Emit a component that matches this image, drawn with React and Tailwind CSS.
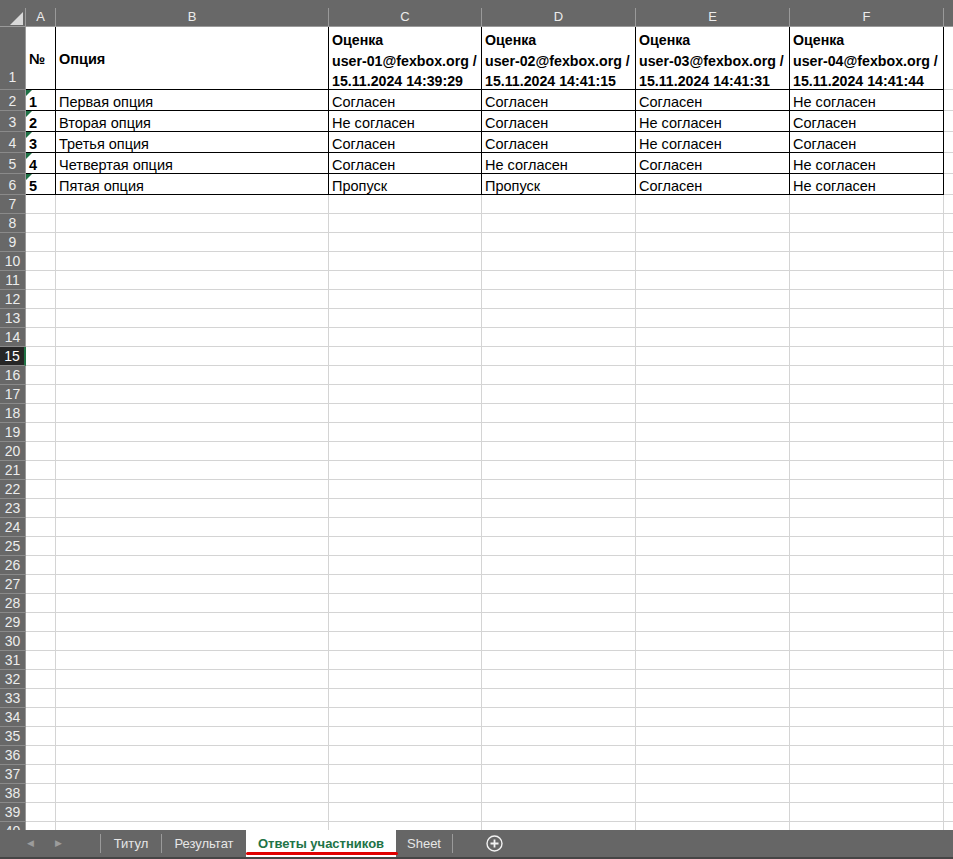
import React from 'react';

const cols = [
  { key: 'A', w: 'w-[30px]' },
  { key: 'B', w: 'w-[273px]' },
  { key: 'C', w: 'w-[153px]' },
  { key: 'D', w: 'w-[154px]' },
  { key: 'E', w: 'w-[154px]' },
  { key: 'F', w: 'w-[154px]' },
];

const heads = [
  ['user-01@fexbox.org /', '15.11.2024 14:39:29'],
  ['user-02@fexbox.org /', '15.11.2024 14:41:15'],
  ['user-03@fexbox.org /', '15.11.2024 14:41:31'],
  ['user-04@fexbox.org /', '15.11.2024 14:41:44'],
];

const data = [
  ['1', 'Первая опция', 'Согласен', 'Согласен', 'Согласен', 'Не согласен'],
  ['2', 'Вторая опция', 'Не согласен', 'Согласен', 'Не согласен', 'Согласен'],
  ['3', 'Третья опция', 'Согласен', 'Согласен', 'Не согласен', 'Согласен'],
  ['4', 'Четвертая опция', 'Согласен', 'Не согласен', 'Согласен', 'Не согласен'],
  ['5', 'Пятая опция', 'Пропуск', 'Пропуск', 'Согласен', 'Не согласен'],
];

function RowHead({ n, h, bottom, pad = '' }) {
  const sel = n === 15;
  return (
    <div
      className={`w-[26px] shrink-0 ${h} ${pad} flex justify-center ${bottom ? 'items-end pb-[1px]' : 'items-center'} text-[14px] border-b border-[#8a8a8a] ${
        sel ? 'bg-[#262626] text-white border-r-2 border-r-[#217346]' : 'bg-[#686868] text-[#ececec] border-r border-r-[#9a9a9a]'
      }`}
    >
      {n}
    </div>
  );
}

function Cell({ w, h, black, children, className = '' }) {
  return (
    <div
      className={`${w} ${h} shrink-0 border-r border-b px-[3px] overflow-hidden whitespace-nowrap ${
        black ? 'border-black' : 'border-[#d4d4d4]'
      } ${className}`}
    >
      {children}
    </div>
  );
}

function Sep() {
  return <div className="w-px shrink-0 bg-[#9a9a9a] my-[4px]" />;
}

export default function App() {
  const empty = [];
  for (let i = 7; i <= 40; i++) empty.push(i);

  return (
    <div
      className="w-[953px] h-[859px] flex flex-col bg-white overflow-hidden select-none"
      style={{ fontFamily: '"Liberation Sans", Arial, sans-serif' }}
    >
      <div className="flex-1 overflow-hidden">
        {/* top band + column headers */}
        <div className="h-[8px] bg-[#686868]" />
        <div className="flex h-[19px] bg-[#686868] text-[#ececec] text-[13px] border-b border-[#9a9a9a]">
          <div className="w-[26px] shrink-0 relative border-r border-[#9a9a9a]">
            <svg className="absolute left-[10px] top-[4px]" width="13" height="13" viewBox="0 0 13 13">
              <polygon points="13,0 13,13 0,13" fill="#d9d9d9" />
            </svg>
          </div>
          {cols.map((c) => (
            <div key={c.key} className={`${c.w} shrink-0 border-r border-[#9a9a9a] flex items-center justify-center`}>
              {c.key}
            </div>
          ))}
          <div className="flex-1" />
        </div>

        {/* row 1 */}
        <div className="flex text-[14.5px] text-black">
          <RowHead n={1} h="h-[63px]" bottom />
          <Cell w={cols[0].w} h="h-[63px]" black className="flex items-center pt-[4px] font-bold">№</Cell>
          <Cell w={cols[1].w} h="h-[63px]" black className="flex items-center pt-[4px] font-bold">Опция</Cell>
          {heads.map((hd, i) => (
            <Cell key={i} w={cols[i + 2].w} h="h-[63px]" black className="font-bold text-[14.2px] leading-[20.5px] pt-[3px]">
              <div>Оценка</div>
              <div>{hd[0]}</div>
              <div>{hd[1]}</div>
            </Cell>
          ))}
          <div className="flex-1 border-b border-[#d4d4d4]" />
        </div>

        {/* data rows */}
        {data.map((r, ri) => (
          <div key={ri} className="flex text-[14.5px] text-black">
            <RowHead n={ri + 2} h="h-[21px]" pad="pt-[3px]" />
            {r.map((v, ci) => (
              <Cell
                key={ci}
                w={cols[ci].w}
                h="h-[21px]"
                black
                className={`relative flex items-end leading-[16px] ${ci === 0 ? 'font-bold' : ''}`}
              >
                {ci === 0 && (
                  <svg className="absolute left-0 top-0" width="6" height="6" viewBox="0 0 6 6">
                    <polygon points="0,0 6,0 0,6" fill="#1e7145" />
                  </svg>
                )}
                {v}
              </Cell>
            ))}
            <div className="flex-1 border-b border-[#d4d4d4]" />
          </div>
        ))}

        {/* empty rows */}
        {empty.map((n) => (
          <div key={n} className="flex">
            <RowHead n={n} h="h-[19px]" />
            {cols.map((c) => (
              <Cell key={c.key} w={c.w} h="h-[19px]" />
            ))}
            <div className="flex-1 border-b border-[#d4d4d4]" />
          </div>
        ))}
      </div>

      {/* sheet tabs */}
      <div className="h-[29px] shrink-0 bg-[#666666] border-b-2 border-[#454545] flex items-stretch text-[13px] text-[#e6e6e6]">
        <div className="w-[100px] shrink-0 flex items-center pl-[27px] gap-[21px] text-[#9c9c9c] text-[9px]">
          <span>◀</span>
          <span>▶</span>
        </div>
        <Sep />
        <div className="w-[60px] shrink-0 flex items-center justify-center">Титул</div>
        <Sep />
        <div className="w-[84px] shrink-0 flex items-center justify-center">Результат</div>
        <div className="relative w-[150px] shrink-0 bg-white flex items-center justify-center font-bold text-[#217346]">
          Ответы участников
          <div className="absolute left-0 right-[-2px] bottom-[2px] h-[3px] bg-[#e00000] rounded-full" />
        </div>
        <div className="w-[56px] shrink-0 flex items-center justify-center">Sheet</div>
        <Sep />
        <div className="pl-[33px] flex items-center">
          <svg width="17" height="17" viewBox="0 0 17 17">
            <circle cx="8.5" cy="8.5" r="7.5" fill="none" stroke="#f2f2f2" strokeWidth="1.4" />
            <path d="M8.5 4.5v8M4.5 8.5h8" stroke="#f2f2f2" strokeWidth="1.8" />
          </svg>
        </div>
      </div>
    </div>
  );
}
